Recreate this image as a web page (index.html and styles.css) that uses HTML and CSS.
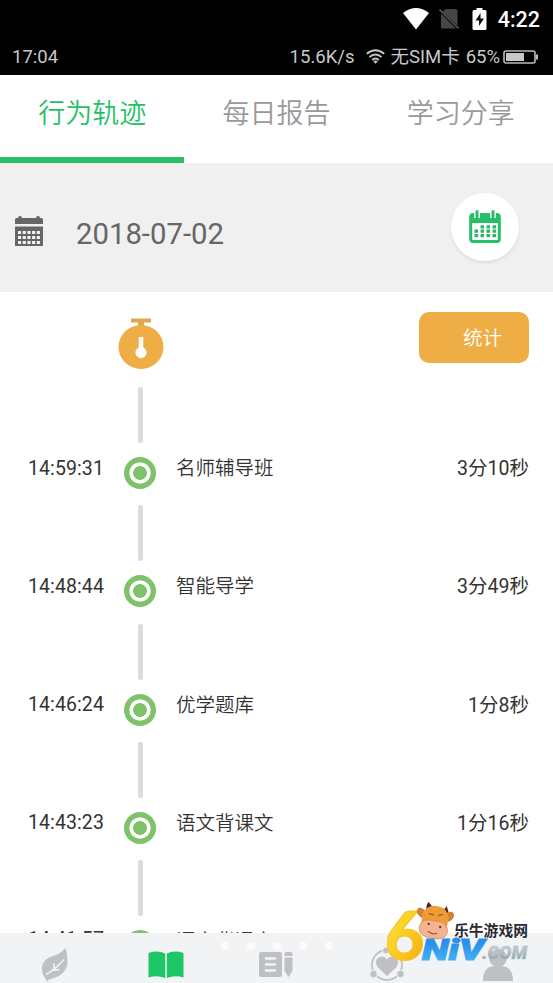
FILE: index.html
```html
<!DOCTYPE html>
<html lang="zh-CN">
<head>
<meta charset="utf-8">
<title>行为轨迹</title>
<link rel="stylesheet" href="styles.css">
</head>
<body>
<div class="app">
  <header class="status">
    <div class="status-row system">
      <svg class="wifi-full" width="26" height="22" viewBox="0 0 26 22"><path d="M0 5Q13-5 26 5L13 21.500Z" fill="#fff"/></svg>
      <svg class="no-sim" width="20" height="22" viewBox="0 0 20 22"><path d="M7 1h10q1.500 0 1.500 1.500v15L3.500 3.500zM2 5.500L17 20.500H3.500Q2 20.500 2 19z" fill="#464646"/><path d="M.5 1.500l19 19" stroke="#555" stroke-width="1.600"/></svg>
      <svg class="charging" width="15" height="22" viewBox="0 0 15 22"><path d="M4.500 0h6v2H13q1.500 0 1.500 1.500v17Q14.500 22 13 22H2Q.5 22 .5 20.500v-17Q.5 2 2 2h2.500z" fill="#fff"/><path d="M8.500 5L3.500 12.500H7V18l5-7.500H8.500z" fill="#111"/></svg>
      <span class="system-time">4:22</span>
    </div>
    <div class="status-row device">
      <span class="device-time">17:04</span>
      <span class="speed">15.6K/s</span>
      <svg class="wifi" width="19" height="15" viewBox="0 0 19 15" fill="none" stroke="#c8c8c8" stroke-width="1.900"><path d="M.8 4.800Q9.500-2.200 18.200 4.800M3.500 8Q9.500 3 15.500 8M6.200 11Q9.500 8.200 12.800 11"/><path d="M7.200 12.200Q9.500 10.800 11.800 12.200L9.500 14.800z" fill="#c8c8c8" stroke="none"/></svg>
      <span class="carrier">无SIM卡</span>
      <span class="percent">65%</span>
      <svg class="battery" width="36" height="14" viewBox="0 0 36 14"><rect x="1" y="1" width="31" height="12" rx="2" fill="none" stroke="#bbb" stroke-width="1.600"/><path d="M3 3h18v8H3z" fill="#c8c8c8"/><path d="M33 4.500h2v5h-2z" fill="#bbb"/></svg>
    </div>
  </header>

  <nav class="tabs">
    <a class="tab active">行为轨迹</a>
    <a class="tab">每日报告</a>
    <a class="tab">学习分享</a>
  </nav>

  <section class="datebar">
    <svg class="date-icon" width="28" height="31" viewBox="0 0 28 31">
      <path d="M0 3.500Q0 2 1.500 2H3Q3 0 5 0T7 2H21Q21 0 23 0T25 2h1.500Q28 2 28 3.500V8H0z" fill="#666"/>
      <path d="M0 10.500h28V30H0z" fill="#666"/>
      <path d="M3 16.500h22M3 21.500h22M3 26.500h22" stroke="#f5f5f5" stroke-width="3.200" stroke-dasharray="3.100 1.600"/>
    </svg>
    <span class="date">2018-07-02</span>
    <button class="pick" aria-label="calendar">
      <svg width="34" height="34" viewBox="0 0 34 34">
        <rect x="2.700" y="4.500" width="28.600" height="27" rx="2.500" fill="none" stroke="#25bf67" stroke-width="3"/>
        <path d="M2 4h30v9H2z" fill="#25bf67"/>
        <path d="M9 1v7M25 1v7" stroke="#fff" stroke-width="6"/><path d="M9 1.500V7M25 1.500V7" stroke="#25bf67" stroke-width="3" stroke-linecap="round"/>
        <path d="M12.500 16.800h16M6.500 21.200h22M6.500 25.600h22" stroke="#2eb56a" stroke-width="3.200" stroke-dasharray="3.600 2.400"/>
      </svg>
    </button>
  </section>

  <main class="timeline">
    <div class="summary">
      <svg class="stopwatch" width="46" height="52" viewBox="0 0 46 52"><path d="M13 .5h20v4h-7V10h-6V4.500h-7z" fill="#dfa651"/><ellipse cx="23" cy="29" rx="22.500" ry="22" fill="#efad45"/><path d="M20.700 19h4.600v10.500a5.600 5.600 0 1 1-4.600 0z" fill="#fff"/></svg>
      <button class="stats">统计</button>
    </div>
    <ul class="events">
      <li class="event"><time>14:59:31</time><i class="marker"></i><span class="name">名师辅导班</span><span class="duration">3分10秒</span></li>
      <li class="event"><time>14:48:44</time><i class="marker"></i><span class="name">智能导学</span><span class="duration">3分49秒</span></li>
      <li class="event"><time>14:46:24</time><i class="marker"></i><span class="name">优学题库</span><span class="duration">1分8秒</span></li>
      <li class="event"><time>14:43:23</time><i class="marker"></i><span class="name">语文背课文</span><span class="duration">1分16秒</span></li>
      <li class="event"><time>14:41:57</time><i class="marker"></i><span class="name">语文背课文</span></li>
    </ul>
  </main>

  <footer class="bottom">
    <svg width="30" height="36" viewBox="0 0 30 36"><path d="M25.500 1Q22 6 13 9Q1 13 2 23Q2.500 27 4 29L7 34.500Q9 32 12 31.500Q26 28 27.500 16Q28 8 25.500 1z" fill="#bec0c4"/><path d="M6 27.500Q16 22 24 12.500M14 22V16.500M12 23.500l7.500-1" fill="none" stroke="#f2f3f5" stroke-width="1.500"/></svg>
    <svg width="36" height="36" viewBox="0 0 36 36"><path d="M.5 6Q10 3 17.200 6.500V31Q9 28 .5 30.500zM35.500 6Q26 3 18.800 6.500V31Q27 28 35.500 30.500z" fill="#1dc765"/></svg>
    <svg width="36" height="36" viewBox="0 0 36 36"><rect x="1" y="5" width="23" height="25" rx="2" fill="#bec0c4"/><path d="M7 11.500h11M7 17.500h11M7 23.500h11" stroke="#f2f3f5" stroke-width="2.600"/><path d="M26.500 9V7q0-2 2-2h4q2 0 2 2v2zM26.500 10.500h8V24l-4 6-4-6z" fill="#bec0c4"/></svg>
    <svg width="36" height="36" viewBox="0 0 36 36"><circle cx="18" cy="18" r="15" fill="none" stroke="#bec0c4" stroke-width="1.800"/><path d="M18 29L8.500 20Q5 14 9 11Q15 7.500 18 12.500Q21 7.500 27 11Q31 14 27.500 20z" fill="#bec0c4"/><g fill="#bec0c4" stroke="#f2f3f5"><circle cx="17" cy="3.500" r="3.500"/><circle cx="4.500" cy="27" r="3.800"/><circle cx="31.500" cy="27" r="3.800"/></g></svg>
    <svg width="36" height="36" viewBox="0 0 36 36"><circle cx="18" cy="11" r="9" fill="#bec0c4"/><path d="M3 34Q3 20 14 19h8q11 1 11 15z" fill="#bec0c4"/></svg>
  </footer>

  <div class="pager"><i></i><i></i><i></i><i></i><i></i></div>

  <svg class="brand" width="150" height="72" viewBox="0 -4 150 72">
    <defs>
      <linearGradient id="gold" x1="0" y1="0" x2="1" y2="1"><stop offset="0" stop-color="#ffe84c"/><stop offset=".6" stop-color="#fbc71c"/><stop offset="1" stop-color="#e9a313"/></linearGradient>
      <linearGradient id="blue" x1="0" y1="0" x2="0" y2="1"><stop offset=".3" stop-color="#2b8eea"/><stop offset="1" stop-color="#48bdf7"/></linearGradient>
      <linearGradient id="steel" x1="0" y1="0" x2="0" y2="1"><stop offset=".3" stop-color="#c3cdd4"/><stop offset="1" stop-color="#8498a6"/></linearGradient>
    </defs>
    <text class="brand-six" x="-2.500" y="54.500" textLength="40" lengthAdjust="spacingAndGlyphs" fill="url(#gold)">6</text>
    <g transform="translate(-3 -4) scale(1.040)">
      <path d="M41 11Q33 3 32 10Q33 16 41 17zM58 13Q67 8 67 14Q66 20 58 20z" fill="#d8842b" stroke="#a55e20" stroke-width=".6"/>
      <path d="M41 8q-1-4 2-7l4 5zM56 9q4-2 4-5l2 6-3 4z" fill="#542323"/>
      <path d="M37 12Q42 3 52 5Q62 7 62 17L60 28H35z" fill="#ed9c38"/>
      <path d="M34 24Q37 16 48 19Q62 20 61 30Q59 38 47 36Q32 34 34 24z" fill="#f5b392" stroke="#d98550" stroke-width=".7"/>
      <path d="M43 12l5 1.500M52 14l5-1M42 29q5 4 9 2" fill="none" stroke="#8f4a2c" stroke-width="1"/>
      <circle cx="43" cy="22" r="1.100" fill="#673024"/><circle cx="54" cy="25" r="1.100" fill="#673024"/>
    </g>
    <text class="brand-name" x="67" y="31" textLength="74" lengthAdjust="spacingAndGlyphs">乐牛游戏网</text>
    <text class="brand-niv" x="35" y="54.500" textLength="62" lengthAdjust="spacingAndGlyphs" fill="url(#blue)">NiV</text>
    <text class="brand-com" x="95" y="54" textLength="45" lengthAdjust="spacingAndGlyphs" fill="url(#steel)">.COM</text>
  </svg>
</div>
</body>
</html>
```
FILE: styles.css
```css
* { box-sizing: border-box; }
body { margin: 0; background: #fff; font-family: Roboto, "Noto Sans CJK SC", sans-serif; color: #333; }
svg { display: block; flex: none; }
button { border: 0; padding: 0; font: inherit; }

.app { position: relative; width: 553px; height: 983px; display: flex; flex-direction: column; overflow: hidden; }

.status { height: 75px; background: #000; color: #c8c8c8; flex: none; }
.status-row { display: flex; align-items: center; height: 38px; padding-right: 13px; white-space: nowrap; }
.system { justify-content: flex-end; color: #fff; }
.no-sim { margin-left: 10px; }
.charging { margin-left: 13px; }
.system-time { margin-left: 11px; font-size: 21.500px; font-weight: 500; }
.device { font-size: 18.500px; padding: 0 14px 0 12px; height: 37px; }
.speed { margin-left: auto; }
.wifi { margin-left: 12px; }
.carrier { margin-left: 5px; line-height: 24px; }
.percent { margin-left: 6px; }
.battery { margin-left: 3px; }

.tabs { display: grid; grid-template-columns: repeat(3, 1fr); height: 88px; flex: none; }
.tab { display: flex; justify-content: center; padding-top: 19px; font-size: 27px; line-height: 40px; font-weight: 350; color: #999; border-bottom: 6px solid transparent; }
.tab.active { color: #25bf67; border-color: #2bbd68; }

.datebar { display: flex; align-items: center; height: 129px; padding: 0 34px 0 15px; background: #f0f0f0; flex: none; }
.date-icon { margin-top: 7px; }
.date { margin: 12px 0 0 33px; font-size: 29.300px; color: #666; }
.pick { display: flex; align-items: center; justify-content: center; width: 68px; height: 68px; margin: 0 0 1px auto; border-radius: 50%; background: #fff; box-shadow: 0 2px 3px #ddd; }

.timeline { height: 641px; overflow: hidden; flex: none; }
.summary { display: flex; justify-content: space-between; align-items: flex-start; height: 95px; padding: 20px 24px 0 118px; }
.stopwatch { margin-top: 6px; }
.stats { width: 110px; height: 51px; padding: 0 0 2px 17px; border-radius: 10px; background: #efad45; color: #fff; font-size: 19.500px; font-weight: 350; }
.events { margin: 0; padding: 0; list-style: none; }
.event { display: grid; grid-template-columns: 96px 32px 1fr auto; column-gap: 20px; align-items: start; height: 118.300px; padding: 0 24px 0 8px; font-size: 19.500px; line-height: 28px; }
.event time { padding: 67.500px 0 0; text-align: right; letter-spacing: .1px; }
.event .name, .event .duration { padding-top: 68px; }
.event .name { font-weight: 350; }
.event:last-child time { padding-top: 66px; }
.marker { display: grid; justify-items: center; row-gap: 14px; }
.marker::before { content: ""; width: 5px; height: 56px; border-radius: 2px; background: #dcdcdc; }
.marker::after { content: ""; width: 32px; height: 32px; border-radius: 50%; background: radial-gradient(circle, #80c16b 0 6.500px, #fff 7.200px 10.200px, #80c16b 11px); }

.bottom { display: grid; grid-template-columns: repeat(5, 1fr); justify-items: center; height: 50px; padding-top: 14px; background: #f2f3f5; flex: none; }

.pager { position: absolute; left: 221px; top: 942px; display: flex; gap: 18px; }
.pager i { width: 8px; height: 8px; border-radius: 50%; background: rgba(255, 255, 255, .75); }

.brand { position: absolute; left: 387px; top: 901px; }
.brand-six { font: 900 67px Lato, sans-serif; stroke: #f6c326; stroke-width: 1px; }
.brand-name { font: 700 15px "Noto Sans CJK SC", sans-serif; fill: #292932; stroke: #fff; stroke-width: 1.500px; paint-order: stroke; }
.brand-niv { font: italic 900 29px Roboto, sans-serif; stroke: url(#blue); stroke-width: 1px; }
.brand-com { font: italic 900 18px Roboto, sans-serif; stroke: #a9b9c4; stroke-width: .4px; }
```
